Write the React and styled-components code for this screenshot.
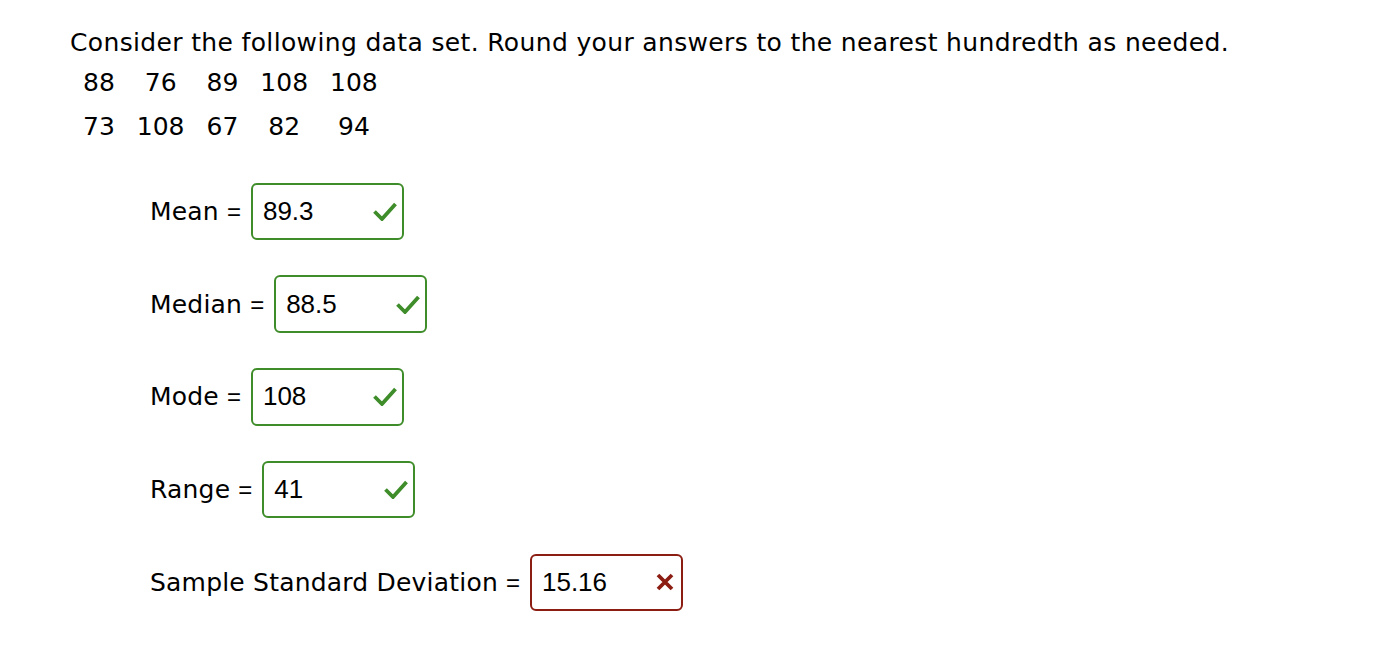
import React from "react";
import styled, { createGlobalStyle } from "styled-components";

const GlobalStyle = createGlobalStyle`
  html, body {
    margin: 0;
    padding: 0;
    background: #ffffff;
  }
  body {
    font-family: "DejaVu Sans", Verdana, sans-serif;
    color: #000;
  }
`;

const Page = styled.main`
  padding: 27.5px 0 0 70px;
  width: 1392px;
  box-sizing: border-box;
  height: 656px;
`;

const Prompt = styled.p`
  margin: 0;
  font-size: 25px;
  line-height: 29px;
  letter-spacing: 0.35px;
  white-space: nowrap;
`;

const DataTable = styled.table`
  border-collapse: collapse;
  margin: 3.5px 0 0 2px;
  font-size: 25px;
`;

const Cell = styled.td`
  padding: 0 11px;
  height: 44px;
  text-align: center;
  vertical-align: middle;
  line-height: 29px;
`;

const Fields = styled.div`
  display: flex;
  flex-direction: column;
  gap: 35.25px;
  margin: 34.5px 0 0 80px;
`;

const FieldRow = styled.div`
  display: flex;
  align-items: center;
  font-size: 25px;
  line-height: 29px;
  letter-spacing: 0.2px;
`;

const Label = styled.span`
  white-space: nowrap;
`;

const Equals = styled.span`
  font-family: "Liberation Sans", Arial, sans-serif;
  font-size: 24px;
  margin: 0 10px 0 8px;
  letter-spacing: 0;
`;

const AnswerBox = styled.div`
  box-sizing: border-box;
  width: 153px;
  height: 57.5px;
  border: 2px solid ${(p) => (p.$correct ? "#3f8d2a" : "#8c1d12")};
  border-radius: 6px;
  display: flex;
  align-items: center;
  justify-content: space-between;
  padding: 0 ${(p) => (p.$correct ? "5px" : "7px")} 0 10px;
  font-family: "Liberation Sans", Arial, sans-serif;
  font-size: 26px;
  letter-spacing: 0;
`;

const Value = styled.span`
  color: #000;
`;

const Check = () => (
  <svg width="24" height="19" viewBox="0 0 24 19" aria-hidden="true">
    <polyline
      points="1.5,9.5 9,17 22.5,2"
      fill="none"
      stroke="#3f8d2a"
      strokeWidth="3.8"
    />
  </svg>
);

const Cross = () => (
  <svg width="18" height="18" viewBox="0 0 18 18" aria-hidden="true">
    <path
      d="M2 2 L16 16 M16 2 L2 16"
      fill="none"
      stroke="#8c1d12"
      strokeWidth="3.8"
    />
  </svg>
);

const data = [
  ["88", "76", "89", "108", "108"],
  ["73", "108", "67", "82", "94"],
];

const answers = [
  { label: "Mean", value: "89.3", correct: true },
  { label: "Median", value: "88.5", correct: true },
  { label: "Mode", value: "108", correct: true },
  { label: "Range", value: "41", correct: true },
  { label: "Sample Standard Deviation", value: "15.16", correct: false },
];

export default function App() {
  return (
    <>
      <GlobalStyle />
      <Page>
        <Prompt>
          Consider the following data set. Round your answers to the nearest
          hundredth as needed.
        </Prompt>
        <DataTable>
          <tbody>
            {data.map((row, i) => (
              <tr key={i}>
                {row.map((v, j) => (
                  <Cell key={j}>{v}</Cell>
                ))}
              </tr>
            ))}
          </tbody>
        </DataTable>
        <Fields>
          {answers.map((a) => (
            <FieldRow key={a.label}>
              <Label>{a.label}</Label>
              <Equals>=</Equals>
              <AnswerBox $correct={a.correct}>
                <Value>{a.value}</Value>
                {a.correct ? <Check /> : <Cross />}
              </AnswerBox>
            </FieldRow>
          ))}
        </Fields>
      </Page>
    </>
  );
}
